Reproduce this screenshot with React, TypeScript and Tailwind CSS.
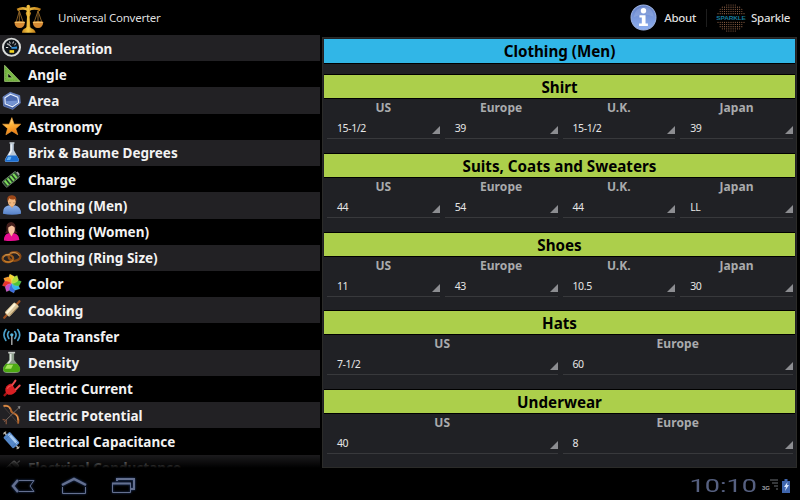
import { useState } from "react";

type Field = { label: string; value: string };

const categories = [
  "Acceleration",
  "Angle",
  "Area",
  "Astronomy",
  "Brix & Baume Degrees",
  "Charge",
  "Clothing (Men)",
  "Clothing (Women)",
  "Clothing (Ring Size)",
  "Color",
  "Cooking",
  "Data Transfer",
  "Density",
  "Electric Current",
  "Electric Potential",
  "Electrical Capacitance",
  "Electrical Conductance",
];

const sections: { title: string; fields: Field[] }[] = [
  {
    title: "Shirt",
    fields: [
      { label: "US", value: "15-1/2" },
      { label: "Europe", value: "39" },
      { label: "U.K.", value: "15-1/2" },
      { label: "Japan", value: "39" },
    ],
  },
  {
    title: "Suits, Coats and Sweaters",
    fields: [
      { label: "US", value: "44" },
      { label: "Europe", value: "54" },
      { label: "U.K.", value: "44" },
      { label: "Japan", value: "LL" },
    ],
  },
  {
    title: "Shoes",
    fields: [
      { label: "US", value: "11" },
      { label: "Europe", value: "43" },
      { label: "U.K.", value: "10.5" },
      { label: "Japan", value: "30" },
    ],
  },
  {
    title: "Hats",
    fields: [
      { label: "US", value: "7-1/2" },
      { label: "Europe", value: "60" },
    ],
  },
  {
    title: "Underwear",
    fields: [
      { label: "US", value: "40" },
      { label: "Europe", value: "8" },
    ],
  },
];

const petals = [
  "#f7d531",
  "#f79a28",
  "#e8342c",
  "#c94fc4",
  "#3c6fe0",
  "#35b5e8",
  "#4fc23a",
  "#b5dc3a",
];

// one drawing per category, same order as the list
const icons = [
  <g key="acceleration">
    <circle cx="35" cy="37" r="26" fill="#10151a" stroke="#d9dbd9" strokeWidth="6" />
    <path d="M18 38h7M21 26l5 4M29 20l2 6M41 20l-2 6M49 26l-5 4" stroke="#e8e8e8" strokeWidth="3" />
    <path d="M34 37l18-2v7H35z" fill="#2f8fd8" />
    <path d="M25 26l10 11" stroke="#fff" strokeWidth="3" />
    <rect x="29" y="46" width="14" height="8" fill="#f3d51f" />
  </g>,
  <g key="angle">
    <path fillRule="evenodd" d="M14 13L61 62H14zM24 37v14h14z" fill="#78b943" stroke="#b6dd8a" strokeWidth="2" />
    <path d="M17 22v37h36" fill="none" stroke="#4f8b28" strokeWidth="2" strokeDasharray="2 3" />
  </g>,
  <g key="area">
    <path d="M31 13L60 23 62 46 39 65 11 55 9 27z" fill="url(#blueFill)" stroke="#7590cc" strokeWidth="2" />
    <path d="M32 19L54 28 57 44 38 57 16 48 15 30z" fill="#4a68ae" stroke="#e6eefc" strokeWidth="3.5" />
    <path d="M18 40l37-2-1 6-16 10-19-8z" fill="#7594d3" />
  </g>,
  <path
    key="astronomy"
    d="M36 11L43 31 63 31 48 45 54 63 36 52 18 63 23 44 8 31 28 31z"
    fill="url(#starFill)"
    stroke="#f4a23a"
    strokeWidth="2"
  />,
  <g key="brix">
    <path d="M31 10h11v20l16 29q1 7-6 8H20q-7-1-5-8l16-28z" fill="#b9c7d7" />
    <path d="M32 13h4v22L22 59h-4l14-26z" fill="#f3f7fb" />
    <path d="M23 47h28l7 13q0 6-6 6H20q-6 0-4-7z" fill="#1c6ed0" />
    <path d="M25 51h10l-4 10H20z" fill="#67b4f5" />
    <path d="M29 9h15" stroke="#dce7ef" strokeWidth="4" />
  </g>,
  <g key="charge" transform="rotate(-39 34 40)">
    <rect x="7" y="29" width="52" height="22" rx="3" fill="#2b4a30" stroke="#8a9a8a" strokeWidth="2" />
    <path d="M16 31v18M27 31v18M38 31v18M49 31v18" stroke="#7fda5a" strokeWidth="6" />
    <path d="M21 32v16M32 32v16M43 32v16" stroke="#1b301e" strokeWidth="2" />
    <rect x="59" y="34" width="5" height="11" fill="#a4a4a4" />
  </g>,
  <g key="men">
    <path d="M9 66Q8 44 25 41H47Q64 45 64 66Q37 72 9 66z" fill="url(#shirtFill)" />
    <path d="M28 39h16l-7 10z" fill="#d8955d" />
    <ellipse cx="36" cy="29" rx="12" ry="15" fill="#f0b77f" />
    <path d="M23 30Q18 9 37 10Q53 10 49 30L46 21Q35 25 28 19z" fill="#9d4819" />
    <path d="M29 33h3M41 33h3" stroke="#603516" strokeWidth="2" />
  </g>,
  <g key="women">
    <path d="M20 35Q16 10 34 9Q50 10 47 34L54 43H15z" fill="#45201d" />
    <path d="M12 65Q12 45 26 43H43Q58 46 59 64Q36 69 12 65z" fill="#e70e91" />
    <path d="M27 40h15l-7 13z" fill="#f3b892" />
    <ellipse cx="35" cy="30" rx="10" ry="14" fill="#f5c29e" />
    <path d="M24 26q-1-12 13-13 11 1 9 13l-10-6z" fill="#45201d" />
  </g>,
  <g key="ring" fill="none">
    <ellipse cx="44" cy="35" rx="18" ry="13" stroke="#8a4a14" strokeWidth="7" />
    <ellipse cx="24" cy="41" rx="16" ry="11" stroke="#9c5a1a" strokeWidth="7" />
    <path d="M10 37q5-10 20-8M30 25q22-7 29 9" stroke="#f0c174" strokeWidth="2" />
    <path d="M12 47q14 10 28 0" stroke="#e79a3c" strokeWidth="2" />
  </g>,
  <g key="color">
    {petals.map((color, i) => (
      <path
        key={color}
        d="M36 38Q21 24 30 9L43 16Q46 28 36 38z"
        fill={color}
        stroke="#fff"
        strokeOpacity="0.35"
        transform={`rotate(${i * -45} 36 38)`}
      />
    ))}
  </g>,
  <g key="cooking" transform="rotate(-47 36 38)">
    <path d="M2 38h14M56 38h14" stroke="#9b4f20" strokeWidth="7" strokeLinecap="round" />
    <rect x="14" y="28" width="44" height="20" rx="4" fill="#dbc69b" />
    <path d="M17 34h38" stroke="#fff4d6" strokeWidth="7" />
    <path d="M18 46h36" stroke="#957443" strokeWidth="2" />
  </g>,
  <g key="data" fill="none" stroke="#4aa0cb" strokeWidth="5" strokeLinecap="round">
    <path d="M18 17q-12 16 0 33M54 17q12 16 0 33M27 23q-8 10 0 21M45 23q8 10 0 21" />
    <path d="M36 35v27" stroke="#b8bdc0" strokeWidth="4" />
    <circle cx="36" cy="33" r="5" fill="#5db8dd" stroke="none" />
  </g>,
  <g key="density">
    <path d="M28 8h15v22l17 22q6 17-11 18H21Q5 69 10 52L28 30z" fill="#8c9c8b" />
    <path d="M30 12h5v20L18 53h-5l17-23z" fill="#e3e8e2" />
    <path d="M18 42h35l8 12q3 13-12 14H22Q7 67 10 54z" fill="#4ca812" />
    <path d="M22 45h18l-6 12H15z" fill="#a5e35c" />
    <path d="M25 8h21" stroke="#c6c9c6" strokeWidth="5" />
  </g>,
  <g key="current">
    <path d="M12 61l10-11" stroke="#a51212" strokeWidth="7" />
    <path d="M35 23L50 46Q39 59 25 57 13 49 17 37 22 25 35 23z" fill="#d91f23" />
    <path d="M37 28l10-14M48 41l12-12" stroke="#ed4b4d" strokeWidth="6" strokeLinecap="round" />
    <path d="M22 39q3-8 11-9" stroke="#f04a4a" strokeWidth="4" fill="none" />
  </g>,
  <g key="potential" fill="none">
    <path d="M10 12Q28 8 33 23 33 32 43 35 59 40 55 66" stroke="#b0632a" strokeWidth="6" />
    <path d="M12 12q16-2 19 10M47 38q9 5 8 18" stroke="#f0a55c" strokeWidth="3" />
    <path d="M10 13L55 65" stroke="#66564b" strokeWidth="1.5" />
    <path d="M13 60L59 16" stroke="#786c65" strokeWidth="3" />
    <path d="M53 14l9-2-2 10z" fill="#888" />
    <path d="M8 53l11 3v12" stroke="#80523a" strokeWidth="4" />
  </g>,
  <g key="capacitance" transform="rotate(48 35 38)">
    <path d="M1 38h14M54 38h14" stroke="#a8a8a8" strokeWidth="5" />
    <path d="M4 32v12M65 32v12" stroke="#c3bca8" strokeWidth="3" />
    <rect x="11" y="24" width="46" height="27" rx="4" fill="#5487c8" />
    <path d="M15 31h38" stroke="#a9ccf2" strokeWidth="8" />
    <path d="M20 25v25M50 25v25" stroke="#3d69a6" strokeWidth="1.5" />
  </g>,
  <g key="conductance" transform="rotate(-43 38 38)">
    <rect x="18" y="26" width="38" height="22" rx="4" fill="#777" stroke="#bbb" strokeWidth="3" />
    <path d="M5 38h13M56 38h12" stroke="#999" strokeWidth="4" />
    <path d="M28 27v20M42 27v20" stroke="#292929" strokeWidth="5" />
  </g>,
];

function Gradients() {
  return (
    <svg className="absolute h-0 w-0">
      <defs>
        <linearGradient id="gold" x1="0" y1="0" x2="1" y2="0">
          <stop offset="0" stopColor="#c4851c" />
          <stop offset="0.45" stopColor="#f5c848" />
          <stop offset="1" stopColor="#c07a14" />
        </linearGradient>
        <linearGradient id="blueFill" x1="0" y1="0" x2="0" y2="1">
          <stop offset="0" stopColor="#6c8acb" />
          <stop offset="1" stopColor="#3b5697" />
        </linearGradient>
        <linearGradient id="starFill" x1="0" y1="0" x2="0.3" y2="1">
          <stop offset="0" stopColor="#fff0bb" />
          <stop offset="0.5" stopColor="#ffb63d" />
          <stop offset="1" stopColor="#f07d12" />
        </linearGradient>
        <linearGradient id="shirtFill" x1="0" y1="0" x2="0" y2="1">
          <stop offset="0" stopColor="#8bb0e8" />
          <stop offset="1" stopColor="#5580c8" />
        </linearGradient>
        <linearGradient id="infoFill" x1="0" y1="0" x2="0" y2="1">
          <stop offset="0" stopColor="#6481c7" />
          <stop offset="1" stopColor="#8eaff0" />
        </linearGradient>
      </defs>
    </svg>
  );
}

function ScalesLogo() {
  return (
    <svg viewBox="0 0 90 90" className="h-[30px] w-[30px]">
      <path d="M6 59L16 24 28 59M60 59L72 24 84 59M16 24v34M72 24v34" fill="none" stroke="#a0702c" strokeWidth="2.5" />
      <path d="M10 21Q27 11 43 21 61 11 79 21" fill="none" stroke="url(#gold)" strokeWidth="8" />
      <path d="M37 11q1-6 6-6t6 6l-2 12 4 8-4 10 2 34H37l2-34-4-10 4-8z" fill="url(#gold)" />
      <path d="M24 89q0-9 10-13 3-5 9-5t9 5q11 4 13 13z" fill="url(#gold)" />
      <path d="M1 57q15-5 32 0-2 18-16 18T1 57zM56 57q16-5 32 0-2 18-16 18T56 57z" fill="#d68a34" />
      <path d="M3 58h29M57 58h29" stroke="#f0bd62" strokeWidth="4" />
    </svg>
  );
}

function InfoIcon() {
  return (
    <svg viewBox="0 0 80 80" className="h-[27px] w-[27px]">
      <circle cx="40" cy="40" r="37" fill="url(#infoFill)" stroke="#9cb2e2" strokeWidth="3" />
      <path d="M11 39Q15 11 41 9T70 38Q40 24 11 39z" fill="#fff" opacity="0.12" />
      <circle cx="40" cy="20" r="8" fill="#fff" />
      <path d="M28 33h18v25h7v7H27v-7h8V40h-7z" fill="#fff" />
    </svg>
  );
}

function SparkleLogo() {
  const dots = [];
  for (let row = 0; row < 13; row++) {
    for (let col = 0; col < 13; col++) {
      const x = 6 + col * 6.5;
      const y = 6 + row * 6.5;
      if (Math.hypot(x - 45, y - 45) < 43 && Math.abs(y - 45) > 7) {
        dots.push(
          <circle key={`${row}-${col}`} cx={x} cy={y} r="1.7" fill="#94664a" />
        );
      }
    }
  }

  return (
    <svg viewBox="0 0 90 90" className="h-[30px] w-[30px]">
      {dots}
      <text
        x="1"
        y="51"
        textLength="88"
        lengthAdjust="spacingAndGlyphs"
        fontFamily="Liberation Sans, sans-serif"
        fontSize="17"
        fontWeight="700"
        fill="#187d9c"
      >
        SPARKLE
      </text>
    </svg>
  );
}

function Spinner({ label, value }: Field) {
  return (
    <div className="flex min-w-0 flex-1 flex-col pr-[2px] pl-[3px]">
      <div className="h-[17px] text-center text-[12px] leading-[17px] font-bold tracking-[0.1px] text-[#aaabad]">
        {label}
      </div>
      <div className="flex h-[23px] items-end justify-between border-b border-[#38393c] pl-[10px]">
        <span className="pb-px text-[10.5px] leading-[17px] tracking-[-0.4px] text-[#e6e6e6]">{value}</span>
        <svg viewBox="0 0 8 8" className="mb-[4px] h-2 w-2">
          <path d="M8 0v8H0z" fill="#8c8d91" />
        </svg>
      </div>
    </div>
  );
}

function NavBar() {
  return (
    <footer className="flex h-8 shrink-0 items-center justify-between bg-black">
      <div className="flex items-center pt-[3px] pl-[10px] text-[#647090] drop-shadow-[0_0_1px_#26427d]">
        <svg viewBox="0 0 26 18" className="h-[18px] w-[26px]" fill="none" stroke="currentColor">
          <path d="M8 3L3 9l5 6" strokeWidth="2.5" />
          <path d="M9 3.5h15l-4 5.5 4 5.5H9" />
        </svg>
        <svg viewBox="0 0 28 18" className="ml-[24px] h-[18px] w-[28px]" fill="none" stroke="currentColor">
          <path d="M2 8L14 2l12 6" strokeWidth="2.5" />
          <path d="M2.5 10v6.5h23V10" />
        </svg>
        <svg viewBox="0 0 26 18" className="ml-[22px] h-[18px] w-[26px]" fill="none" stroke="currentColor">
          <path d="M7 4V2h17v10h-3" strokeWidth="2" />
          <path d="M2.5 6.5h18v9h-18z" />
          <path d="M2 6.5h19" strokeWidth="2" />
        </svg>
      </div>
      <div className="flex items-center pt-[3px] pr-[10px]">
        <div className="flex w-[70px] justify-end">
          <span className="origin-right scale-x-[1.5] font-[Roboto,sans-serif] text-[18px] leading-[18px] font-normal text-[#566080]">
            10:10
          </span>
        </div>
        <span className="mt-[6px] ml-[5px] font-['Liberation_Sans',sans-serif] text-[6px] font-bold text-[#a3a5aa]">
          3G
        </span>
        <svg viewBox="0 0 8 13" className="h-[13px] w-2" stroke="#35373a" strokeWidth="2">
          <path d="M0 1h8M2 4h6M4 7h4M6 10h2" />
        </svg>
        <svg viewBox="0 0 8 14" className="ml-1 h-[14px] w-2">
          <path d="M2.5 0h3v2H8v12H0V2h2.5z" fill="#3f65ac" />
          <path d="M5.5 3L2 8h2l-1 4 4-6H5z" fill="#d9e7ff" />
        </svg>
      </div>
    </footer>
  );
}

export default function App() {
  const [selected, setSelected] = useState("Clothing (Men)");

  return (
    <div className="flex h-[500px] w-[800px] flex-col overflow-hidden bg-black font-['Noto_Sans',sans-serif] text-white">
      <Gradients />

      {/* Action bar */}
      <header className="flex h-[35px] shrink-0 items-center">
        <div className="ml-[14px]">
          <ScalesLogo />
        </div>
        <h1 className="ml-[14px] text-[11.5px] tracking-[-0.25px] text-[#dedede]">Universal Converter</h1>
        <div className="ml-auto flex items-center text-[11.5px] font-medium tracking-[-0.3px] text-[#dedede]">
          <InfoIcon />
          <span className="ml-[7px]">About</span>
          <div className="ml-[10px] h-[18px] w-px bg-[#1e1e1e]" />
          <div className="ml-[9px]">
            <SparkleLogo />
          </div>
          <span className="mr-[10px] ml-[5px]">Sparkle</span>
        </div>
      </header>

      <main className="flex min-h-0 flex-1">
        {/* Categories */}
        <nav className="relative w-[320px] shrink-0 overflow-hidden">
          {categories.map((name, i) => (
            <button
              key={name}
              onClick={() => setSelected(name)}
              className={`flex h-[26.23px] w-full items-center text-left ${i % 2 === 0 ? "bg-[#222124]" : "bg-black"}`}
            >
              <svg viewBox="0 0 70 79" className="h-[26px] w-[23px] shrink-0">
                {icons[i]}
              </svg>
              <span className="ml-[5px] pt-[0.8px] text-[13.5px] leading-[20px] font-bold whitespace-nowrap text-[#f2f2f2]">
                {name}
              </span>
            </button>
          ))}
          <div className="pointer-events-none absolute inset-x-0 bottom-0 h-4 bg-linear-to-b from-transparent to-black" />
        </nav>

        {/* Size tables */}
        <section className="mt-[2px] ml-[2px] flex w-[475px] flex-col border border-[#2b2b29] bg-[#202125] px-px pt-px">
          <h2 className="h-[25px] shrink-0 border-b border-black bg-[#31b6e7] text-center text-[15.2px] leading-[25px] font-bold text-black">
            {selected}
          </h2>
          {sections.map((section) => (
            <div key={section.title} className="h-[78.7px] shrink-0 pt-[10.3px]">
              <h3 className="h-[25px] border-y border-black bg-[#accf4b] text-center text-[15.2px] leading-[24px] font-bold text-black">
                {section.title}
              </h3>
              <div className="flex">
                {section.fields.map((field) => (
                  <Spinner key={field.label} label={field.label} value={field.value} />
                ))}
              </div>
            </div>
          ))}
        </section>
      </main>

      <NavBar />
    </div>
  );
}
